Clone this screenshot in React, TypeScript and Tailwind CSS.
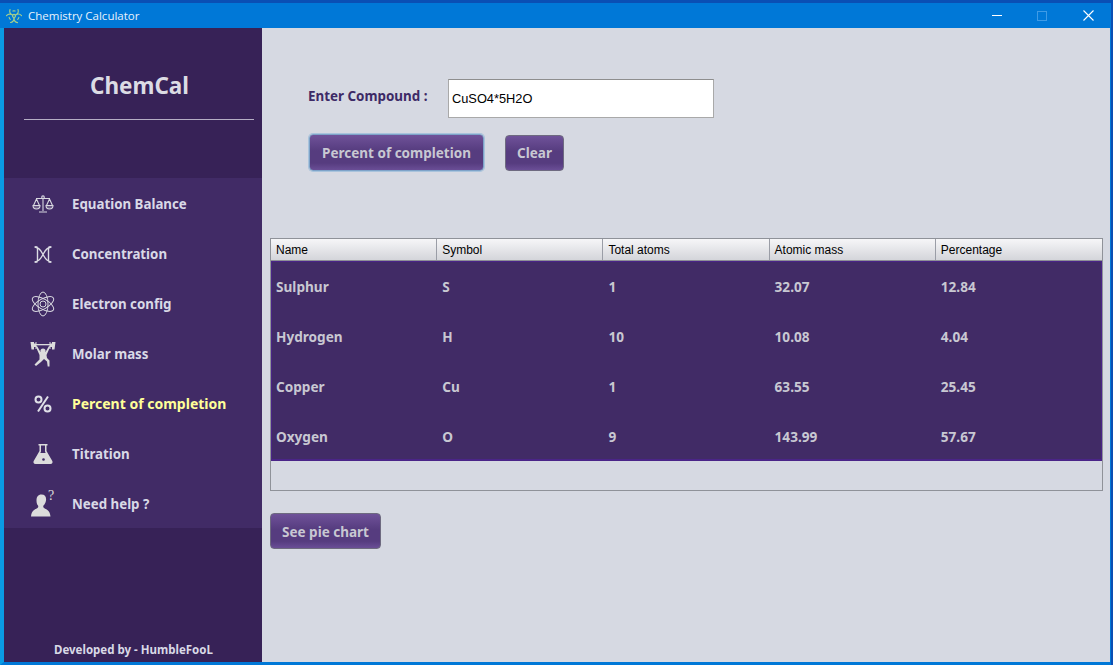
import { Biohazard } from "lucide-react";
import type { ReactNode } from "react";

const tahoma = "font-['Noto_Sans',sans-serif]";

function ScaleIcon() {
  return (
    <svg width="22" height="18" viewBox="0 0 22 18" fill="none" stroke="#d8d8e0" strokeWidth="1.1">
      <path d="M11 3v13M7 17h8M4 3.500h14" />
      <circle cx="11" cy="2.200" r="1.300" />
      <path d="M4.500 4 1.500 10.500M4.500 4l3 6.500M17.500 4l-3 6.500M17.500 4l3 6.500" />
      <path d="M1 10.500h7a3.500 3.500 0 0 1-7 0ZM14 10.500h7a3.500 3.500 0 0 1-7 0Z" fill="#6c5a88" />
    </svg>
  );
}

function HelixIcon() {
  return (
    <svg width="18" height="17" viewBox="0 0 18 17" fill="none" stroke="#dcdce4" strokeWidth="1.400">
      <path d="M1 1c5 1 6 4 8 7.500s3 6.500 8 7.500M17 1c-5 1-6 4-8 7.500s-3 6.500-8 7.500" />
      <path d="M3.500 2v13M14.500 2v13M.5 1h3M14.500 1h3M.5 16h3M14.500 16h3" />
    </svg>
  );
}

function AtomIcon() {
  return (
    <svg width="24" height="26" viewBox="0 0 24 26" fill="none" stroke="#d8d8e0" strokeWidth="1">
      <ellipse cx="12" cy="13" rx="5" ry="12" />
      <ellipse cx="12" cy="13" rx="5" ry="12" transform="rotate(60 12 13)" />
      <ellipse cx="12" cy="13" rx="5" ry="12" transform="rotate(120 12 13)" />
      <circle cx="12" cy="13" r="3" />
    </svg>
  );
}

function LifterIcon() {
  return (
    <svg width="26" height="26" viewBox="0 0 26 26" fill="#dcdcdc">
      <path d="M.5 1H4v1.500h1.500V1H6.500v7H5.500V6H4v2.500H1.500Z" />
      <path d="M25.500 1H22v1.500h-1.500V1h-1v7h1V6H22v2.500h2.500Z" />
      <rect x="6" y="3" width="14" height="1.300" />
      <path d="M7 5 10.500 11h5L19 5l1.300.6-3.800 8.400.5 3 2.500 2.500V25.500h-1.800l-.7-5-3-2.500-3 3-5 4-1.500-1.600 5-5L9.500 14 5.700 5.600Z" />
      <circle cx="13" cy="10" r="2.600" />
    </svg>
  );
}

function PercentIcon() {
  return (
    <svg width="18" height="18" viewBox="0 0 18 18" fill="none" stroke="#e0e0e8" strokeWidth="2">
      <circle cx="4.500" cy="4.500" r="3" />
      <circle cx="13.500" cy="13.500" r="3" />
      <path d="M14 1.500 4 16.500" />
    </svg>
  );
}

function FlaskIcon() {
  return (
    <svg width="20" height="20" viewBox="0 0 20 20" fill="#dcdcdc">
      <path
        d="M5.500 0h9v1.500h-1V7l5.800 10c.7 1.300 0 3-1.800 3H2.500C.7 20 0 18.300.7 17L6.500 7V1.500h-1ZM8 1.500v6L7.300 9h5.400L12 7.500v-6Z"
        fillRule="evenodd"
      />
      <circle cx="10.500" cy="15.500" r="1.300" fill="#412b66" />
    </svg>
  );
}

function HelpIcon() {
  return (
    <div className="relative h-[24px] w-[24px]">
      <svg width="20" height="23" viewBox="0 0 20 22" fill="#dcdcdc" className="absolute left-0 top-[2px]">
        <path d="M10.500 0C14 0 15.500 2.500 15 6c-.4 2.500-1.500 4-2.500 5-.5.8-.3 2 .5 2.500 2.500 1.500 6 2.500 6.500 8.500H0c.5-6 4-7 6.500-8.500.8-.5 1-1.700.5-2.500C6 10 5.500 8.500 5.500 6c0-3.500 1.500-6 5-6Z" />
      </svg>
      <span className="absolute left-[17px] top-[-3px] font-['Liberation_Serif',serif] text-[14px] leading-none text-[#dcdcdc]">?</span>
    </div>
  );
}

const navItems: { label: string; icon: ReactNode; active?: boolean }[] = [
  { label: "Equation Balance", icon: <ScaleIcon /> },
  { label: "Concentration", icon: <HelixIcon /> },
  { label: "Electron config", icon: <AtomIcon /> },
  { label: "Molar mass", icon: <LifterIcon /> },
  { label: "Percent of completion", icon: <PercentIcon />, active: true },
  { label: "Titration", icon: <FlaskIcon /> },
  { label: "Need help ?", icon: <HelpIcon /> },
];

const columns = ["Name", "Symbol", "Total atoms", "Atomic mass", "Percentage"];

const rows = [
  ["Sulphur", "S", "1", "32.07", "12.84"],
  ["Hydrogen", "H", "10", "10.08", "4.04"],
  ["Copper", "Cu", "1", "63.55", "25.45"],
  ["Oxygen", "O", "9", "143.99", "57.67"],
];

function PurpleButton({ children, className }: { children: ReactNode; className: string }) {
  return (
    <button
      className={`flex items-center justify-center rounded-[4px] bg-[linear-gradient(#6f5299,#563c7f_45%,#563c7f_80%,#6a4e96)] pt-[2px] text-[13.500px] font-bold text-[#c8c8d2] ${className}`}
    >
      {children}
    </button>
  );
}

export default function App() {
  return (
    <div className={`h-[665px] w-[1113px] overflow-hidden bg-[#0a4fb4] pr-[2px] pt-[3px] ${tahoma}`}>
      <div className="flex h-[662px] flex-col bg-[#0078d7]">
        {/* Title bar */}
        <div className="flex h-[25px] items-center pl-[5px] text-white">
          <Biohazard className="h-[18px] w-[18px] text-[#a5cf8c]" strokeWidth={1.5} />
          <span className="ml-[5px] font-['Open_Sans',sans-serif] text-[11.500px] leading-none text-[#e8f2fc]">Chemistry Calculator</span>
          <div className="ml-auto flex items-center">
            <div className="h-[1px] w-[10px] bg-white" />
            <div className="ml-[35px] h-[10px] w-[10px] border border-[#3f9be6]" />
            <svg width="11" height="11" viewBox="0 0 11 11" stroke="white" strokeWidth="1.100" className="ml-[36px] mr-[17px]">
              <path d="M.5.5l10 10M10.500.5l-10 10" />
            </svg>
          </div>
        </div>

        <div className="flex min-h-0 flex-1 border-b-[3px] border-l-[4px] border-r-[1px] border-b-[#0078d7] border-l-[#0a9be4] border-r-[#0078d7]">
          {/* Sidebar */}
          <aside className="flex w-[258px] shrink-0 flex-col bg-[#372257]">
            <div className="flex h-[150px] flex-col px-[20px] pt-[43px]">
              <h1 className="pl-[13px] text-center text-[22.500px] font-bold leading-[30px] text-[#dcdce4]">ChemCal</h1>
              <div className="mt-[18px] h-[1px] w-[230px] bg-[#b5aec4]" />
            </div>
            <nav className="bg-[#412b66]">
              {navItems.map((item) => (
                <div key={item.label} className="flex h-[50px] items-center">
                  <div className="mt-[2px] flex w-[68px] shrink-0 justify-center pl-[10px]">
                    <div className="flex w-[26px] justify-center">{item.icon}</div>
                  </div>
                  <span
                    className={`font-bold ${item.active ? "text-[14px] text-[#ffff99]" : "mt-[3px] text-[13.300px] text-[#d9d9e6]"}`}
                  >
                    {item.label}
                  </span>
                </div>
              ))}
            </nav>
            <div className="mt-auto pb-[4px] pl-[50px] text-[11.500px] font-bold leading-[16px] text-[#d9d9e6]">
              Developed by - HumbleFooL
            </div>
          </aside>

          {/* Main */}
          <main className="flex min-w-0 flex-1 flex-col bg-[#d6d9e2] pl-[8px] pr-[7px] pt-[51px]">
            <div className="ml-[38px] flex h-[39px] items-start">
              <label className="mt-[7px] w-[140px] text-[13.400px] font-bold leading-[20px] text-[#3d2a66]">
                Enter Compound :
              </label>
              <div className="flex h-[39px] w-[266px] items-center border border-[#a9a9a9] border-t-[#8e8e8e] bg-white pl-[3px] font-['Liberation_Sans',sans-serif] text-[12.800px] text-black">
                CuSO4*5H2O
              </div>
            </div>

            <div className="ml-[39px] mt-[16px] flex items-center gap-[21px]">
              <PurpleButton className="h-[37px] w-[175px] border border-[#7da3c8] shadow-[0_0_0_1px_#a9c3dc]">
                Percent of completion
              </PurpleButton>
              <PurpleButton className="h-[36px] w-[59px] border border-[#6e6a80]">Clear</PurpleButton>
            </div>

            {/* Table */}
            <div className="mt-[67px] flex h-[253px] flex-col border border-[#8f9299] bg-[#d6d9e2]">
              <div className="grid h-[22px] shrink-0 grid-cols-5 border-b border-[#8e9096] bg-[linear-gradient(#f6f6f8,#d4d5da)] font-['Liberation_Sans',sans-serif] text-[12px] text-black">
                {columns.map((col) => (
                  <div key={col} className="flex items-center border-r border-[#9a9da6] pl-[5px] last:border-r-0">
                    {col}
                  </div>
                ))}
              </div>
              <div className="h-[200px] overflow-hidden bg-[#412b66] pt-[1px] shadow-[inset_0_0_0_1px_#4a2488,inset_0_-1px_0_1px_#4a2488]">
                {rows.map((row) => (
                  <div key={row[0]} className="grid h-[50px] grid-cols-5">
                    {row.map((cell, i) => (
                      <div key={i} className="flex items-center pl-[5px] text-[13.600px] font-bold text-[#c8c8d2]">
                        {cell}
                      </div>
                    ))}
                  </div>
                ))}
              </div>
            </div>

            <PurpleButton className="mt-[22px] h-[36px] w-[111px] border border-[#6e6a80]">See pie chart</PurpleButton>
          </main>
        </div>
      </div>
    </div>
  );
}
